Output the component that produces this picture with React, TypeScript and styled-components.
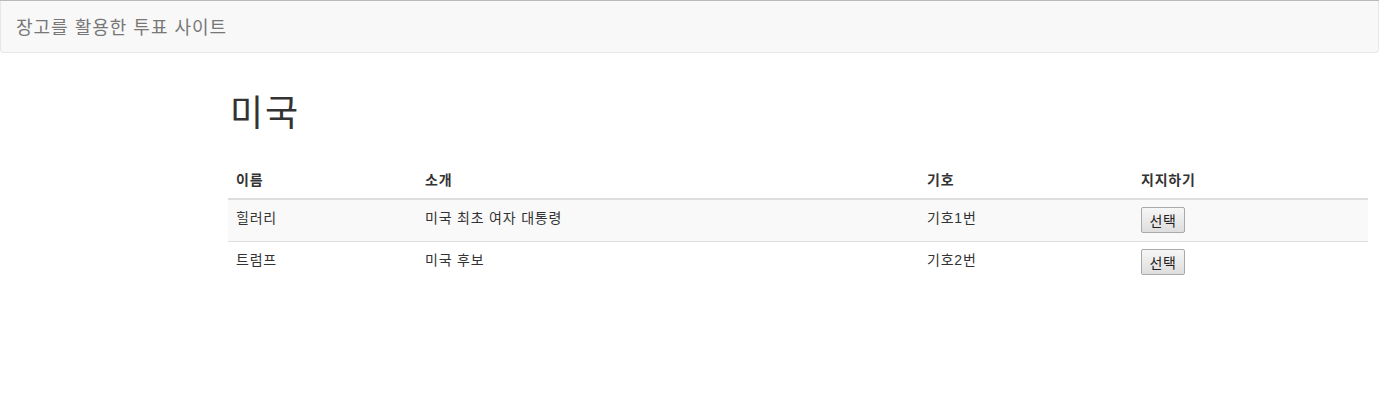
import React from "react";
import styled, { createGlobalStyle } from "styled-components";

const GlobalStyle = createGlobalStyle`
  html, body { margin: 0; padding: 0; background: #fff; }
  body {
    font-family: "Liberation Sans", "Noto Sans CJK KR", Arial, sans-serif;
    font-size: 14px;
    line-height: 20px;
    color: #333;
  }
  * { box-sizing: border-box; }
`;

const Page = styled.div`
  border-top: 1px solid #b9b9b9;
`;

const Navbar = styled.nav`
  height: 52px;
  background: #f8f8f8;
  border: 1px solid #e7e7e7;
  border-top: none;
  border-radius: 0 0 4px 4px;
  display: flex;
  align-items: center;
  padding: 2px 15px 0;
`;

const Brand = styled.a`
  font-size: 18px;
  line-height: 20px;
  letter-spacing: 1px;
  color: #777;
  text-decoration: none;
`;

const Container = styled.main`
  padding: 0 0 0 228px;
  width: 1368px;
`;

const Title = styled.h1`
  margin: 41px 0 0;
  font-size: 36px;
  font-weight: 400;
  line-height: 40px;
  letter-spacing: 2px;
  color: #333;
  padding-left: 2px;
`;

const Table = styled.table`
  width: 1140px;
  margin-top: 28px;
  border-collapse: collapse;
  border-spacing: 0;
  letter-spacing: 0.8px;
`;

const Th = styled.th<{ $w: number }>`
  width: ${(p) => p.$w}px;
  text-align: left;
  font-weight: bold;
  padding: 8px;
  line-height: 20px;
  vertical-align: bottom;
  border-bottom: 2px solid #ddd;
`;

const Tr = styled.tr<{ $striped?: boolean }>`
  background: ${(p) => (p.$striped ? "#f9f9f9" : "#fff")};
  height: 42px;
`;

const Td = styled.td`
  padding: 8px;
  line-height: 20px;
  vertical-align: top;
  border-top: 1px solid #ddd;
`;

const SelectButton = styled.button`
  font-family: "Liberation Sans", "Noto Sans CJK KR", Arial, sans-serif;
  font-size: 14px;
  letter-spacing: 0.5px;
  height: 26px;
  width: 44px;
  margin-top: -1px;
  padding: 0 4px;
  border: 1px solid #a9a9a9;
  border-radius: 2px;
  background: linear-gradient(#f6f6f6, #dedede);
  color: #222;
  cursor: pointer;
`;

const rows = [
  { name: "힐러리", intro: "미국 최초 여자 대통령", num: "기호1번" },
  { name: "트럼프", intro: "미국 후보", num: "기호2번" },
];

export default function App() {
  return (
    <>
      <GlobalStyle />
      <Page>
        <Navbar>
          <Brand href="#">장고를 활용한 투표 사이트</Brand>
        </Navbar>
        <Container>
          <Title>미국</Title>
          <Table>
            <thead>
              <tr>
                <Th $w={189}>이름</Th>
                <Th $w={502}>소개</Th>
                <Th $w={214}>기호</Th>
                <Th $w={235}>지지하기</Th>
              </tr>
            </thead>
            <tbody>
              {rows.map((r, i) => (
                <Tr key={r.name} $striped={i % 2 === 0}>
                  <Td>{r.name}</Td>
                  <Td>{r.intro}</Td>
                  <Td>{r.num}</Td>
                  <Td>
                    <SelectButton type="button">선택</SelectButton>
                  </Td>
                </Tr>
              ))}
            </tbody>
          </Table>
        </Container>
      </Page>
    </>
  );
}
